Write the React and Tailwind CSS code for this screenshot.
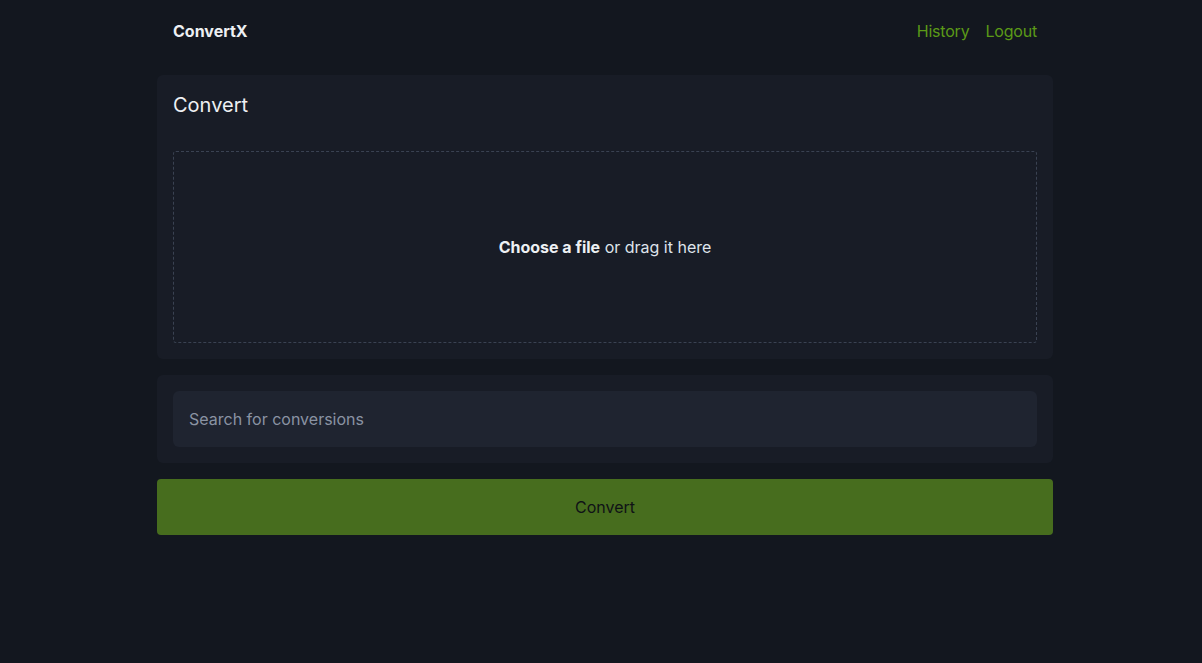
export default function App() {
  return (
    <div className="min-h-[663px] bg-[#13171f] font-['Inter',sans-serif] text-[#dfe3eb]">
      <div className="ml-[157px] w-[896px]">
        {/* Header */}
        <header className="flex h-[62px] items-center justify-between px-4">
          <a className="text-base font-bold text-[#edf0f3]">ConvertX</a>
          <nav className="flex items-center gap-4 text-base tracking-[-0.2px] text-[#5b9a17]">
            <a>History</a>
            <a>Logout</a>
          </nav>
        </header>

        <main className="mt-[13px] flex flex-col">
          {/* Upload card */}
          <section className="rounded-md bg-[#181c26] p-4">
            <h2 className="text-[20px] leading-[28px] text-[#edf0f3]">Convert</h2>
            <div className="mt-8 flex h-[192px] items-center justify-center rounded-[3px] border border-dashed border-[#3a4252]">
              <p className="text-base text-[#dfe3eb]">
                <b className="font-bold text-[#edf0f3]">Choose a file</b> or drag it here
              </p>
            </div>
          </section>

          {/* Search card */}
          <section className="mt-4 rounded-md bg-[#181c26] p-4">
            <input
              placeholder="Search for conversions"
              className="h-[56px] w-full rounded-md bg-[#1f2430] px-4 text-base text-[#dfe3eb] outline-none placeholder:text-[#8a93a3]"
            />
          </section>

          <button className="mt-4 h-[56px] w-full rounded-[4px] bg-[#476d1e] text-base text-[#0f1216]">
            Convert
          </button>
        </main>
      </div>
    </div>
  );
}
